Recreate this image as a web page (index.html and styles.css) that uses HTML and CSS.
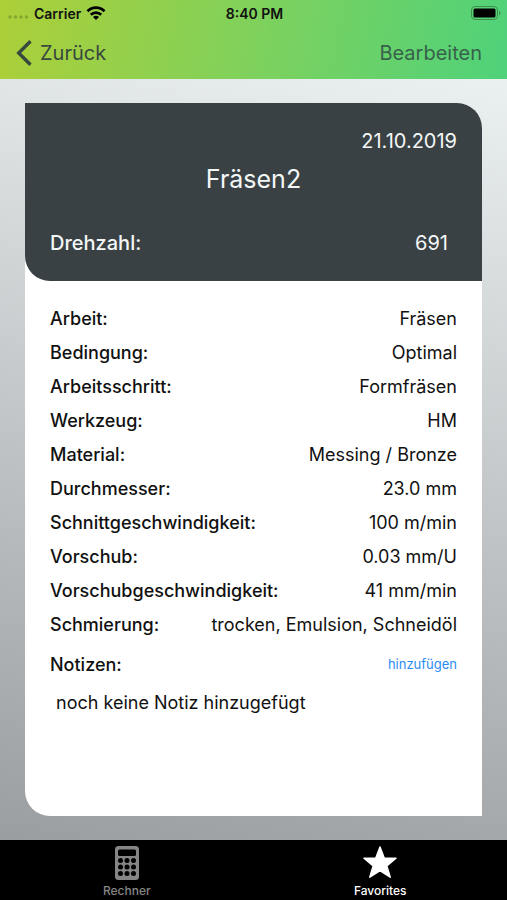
FILE: index.html
```html
<!DOCTYPE html>
<html lang="de">
<head>
  <meta charset="UTF-8">
  <meta name="viewport" content="width=device-width, initial-scale=1.0">
  <title>Fräsen2</title>
  <link rel="stylesheet" href="styles.css">
</head>
<body>
  <header class="top-bar">
    <div class="status-bar">
      <div class="carrier">
        <svg width="21" height="12" viewBox="0 0 21 12" fill="#84a832">
          <circle cx="2" cy="10" r="1.700"/>
          <circle cx="7.500" cy="10" r="1.700"/>
          <circle cx="13" cy="10" r="1.700"/>
          <circle cx="18.500" cy="10" r="1.700"/>
        </svg>
        <span>Carrier</span>
        <svg width="20" height="14" viewBox="0 0 20 14" fill="none" stroke="#000" stroke-width="2.800">
          <path d="M1.500 5.200a12 12 0 0 1 17 0"/>
          <path d="M4.800 8.800a7.400 7.400 0 0 1 10.400 0"/>
          <path d="M10 14L7 11a4.200 4.200 0 0 1 6 0z" fill="#000" stroke="none"/>
        </svg>
      </div>
      <div class="time">8:40 PM</div>
      <svg class="battery" width="30" height="14" viewBox="0 0 30 14">
        <rect x="0.500" y="0.500" width="26" height="13" rx="3.500" fill="none" stroke="#3f8e50"/>
        <rect x="2.500" y="2.500" width="22" height="9" rx="1.500" fill="#000"/>
        <path d="M28 4.800c2 .8 2 3.600 0 4.400z" fill="#3f8e50"/>
      </svg>
    </div>
    <nav class="nav-bar">
      <a class="back" href="#">
        <svg width="16" height="26" viewBox="0 0 16 26" fill="none" stroke="currentColor" stroke-width="3.400">
          <path d="M14.500 1.200L2.700 13l11.800 11.800"/>
        </svg>
        <span>Zurück</span>
      </a>
      <button class="edit-button" type="button">Bearbeiten</button>
    </nav>
  </header>

  <main class="content">
    <article class="card">
      <div class="card-header">
        <div class="date">21.10.2019</div>
        <h1>Fräsen2</h1>
        <div class="speed">
          <span class="speed-label">Drehzahl:</span>
          <span class="speed-value">691</span>
        </div>
      </div>
      <div class="card-body">
        <dl class="details">
          <div class="row"><dt>Arbeit:</dt><dd>Fräsen</dd></div>
          <div class="row"><dt>Bedingung:</dt><dd>Optimal</dd></div>
          <div class="row"><dt>Arbeitsschritt:</dt><dd>Formfräsen</dd></div>
          <div class="row"><dt>Werkzeug:</dt><dd>HM</dd></div>
          <div class="row"><dt>Material:</dt><dd>Messing / Bronze</dd></div>
          <div class="row"><dt>Durchmesser:</dt><dd>23.0 mm</dd></div>
          <div class="row"><dt>Schnittgeschwindigkeit:</dt><dd>100 m/min</dd></div>
          <div class="row"><dt>Vorschub:</dt><dd>0.03 mm/U</dd></div>
          <div class="row"><dt>Vorschubgeschwindigkeit:</dt><dd>41 mm/min</dd></div>
          <div class="row"><dt>Schmierung:</dt><dd>trocken, Emulsion, Schneidöl</dd></div>
        </dl>
        <div class="notes-header">
          <h2>Notizen:</h2>
          <button class="add-button" type="button">hinzufügen</button>
        </div>
        <p class="note">noch keine Notiz hinzugefügt</p>
      </div>
    </article>
  </main>

  <nav class="tab-bar">
    <a class="tab" href="#">
      <svg width="24" height="34" viewBox="0 0 24 34">
        <rect width="24" height="34" rx="3.500" fill="#858585"/>
        <rect x="3" y="3.500" width="18" height="6.500" rx="1.500" fill="#000"/>
        <g fill="#000">
          <circle cx="5.500" cy="14.500" r="2.500"/>
          <circle cx="12" cy="14.500" r="2.500"/>
          <circle cx="18.500" cy="14.500" r="2.500"/>
          <circle cx="5.500" cy="21" r="2.500"/>
          <circle cx="12" cy="21" r="2.500"/>
          <circle cx="18.500" cy="21" r="2.500"/>
          <circle cx="5.500" cy="27.500" r="2.500"/>
          <circle cx="12" cy="27.500" r="2.500"/>
          <circle cx="18.500" cy="27.500" r="2.500"/>
        </g>
      </svg>
      <span>Rechner</span>
    </a>
    <a class="tab active" href="#">
      <svg width="34" height="34" viewBox="0 0 34 34" fill="#fff" stroke="#fff" stroke-width="1.500" stroke-linejoin="round">
        <path d="M17 1l4.300 11.200H33l-9.200 7.600 3.400 11.400L17 24.600 6.800 31.200l3.400-11.400L1 12.200h11.700z"/>
      </svg>
      <span>Favorites</span>
    </a>
  </nav>
</body>
</html>
```

FILE: styles.css
```css
* {
  box-sizing: border-box;
}
body {
  margin: 0;
  min-height: 100vh;
  display: flex;
  flex-direction: column;
  font-family: Inter, 'Liberation Sans', sans-serif;
  font-size: 18px;
  color: #111;
}
h1, h2, p, dl, dd {
  margin: 0;
}
a {
  color: inherit;
  text-decoration: none;
}
button {
  padding: 0;
  border: none;
  background: none;
  font-family: inherit;
  cursor: pointer;
}
.top-bar {
  height: 79px;
  background: linear-gradient(100deg, #adcf38, #7fd15c 50%, #4fd27a);
}
.status-bar {
  display: grid;
  grid-template-columns: 1fr auto 1fr;
  align-items: center;
  height: 26px;
  padding: 0 6px 0 8px;
  font-size: 14px;
  font-weight: 600;
  color: #111;
}
.carrier {
  display: flex;
  align-items: center;
  gap: 5px;
}
.battery {
  justify-self: end;
}
.nav-bar {
  display: flex;
  justify-content: space-between;
  align-items: center;
  height: 53px;
  padding: 0 25px 0 16px;
}
.back {
  display: flex;
  align-items: center;
  gap: 8px;
  font-size: 20px;
  color: #38483f;
}
.edit-button {
  font-size: 20px;
  color: #38614a;
}
.content {
  flex: 1;
  display: flex;
  padding: 24px 25px;
  background: linear-gradient(192deg, #ebf0f1, #bec2c4 55%, #9a9ea1);
}
.card {
  flex: 1;
  display: flex;
  flex-direction: column;
  background-color: #fff;
  border-radius: 0 25px 0 25px;
  overflow: hidden;
}
.card-header {
  height: 178px;
  padding: 24px 25px;
  background-color: #394144;
  border-radius: 0 0 0 25px;
  color: #f4f7f7;
}
.date {
  font-size: 20px;
  line-height: 28px;
  text-align: right;
}
h1 {
  margin-top: 6px;
  font-size: 25px;
  font-weight: 400;
  line-height: 36px;
  text-align: center;
}
.speed {
  display: flex;
  justify-content: space-between;
  margin-top: 32px;
  padding-right: 9px;
  font-size: 20px;
  line-height: 28px;
}
.speed-label {
  font-weight: 500;
}
.card-body {
  padding: 21px 25px;
}
.row {
  display: flex;
  justify-content: space-between;
  line-height: 34px;
}
dt, h2 {
  font-size: 18px;
  font-weight: 500;
}
.notes-header {
  display: flex;
  justify-content: space-between;
  align-items: center;
  height: 44px;
}
.add-button {
  font-size: 13px;
  color: #2b8cf5;
}
.note {
  padding: 0 6px;
  line-height: 34px;
}
.tab-bar {
  display: flex;
  height: 60px;
  background-color: #000;
}
.tab {
  flex: 1;
  display: flex;
  flex-direction: column;
  align-items: center;
  gap: 2px;
  padding-top: 6px;
  font-size: 12px;
  font-weight: 500;
  line-height: 18px;
  color: #858585;
}
.tab.active {
  color: #fff;
}
```
